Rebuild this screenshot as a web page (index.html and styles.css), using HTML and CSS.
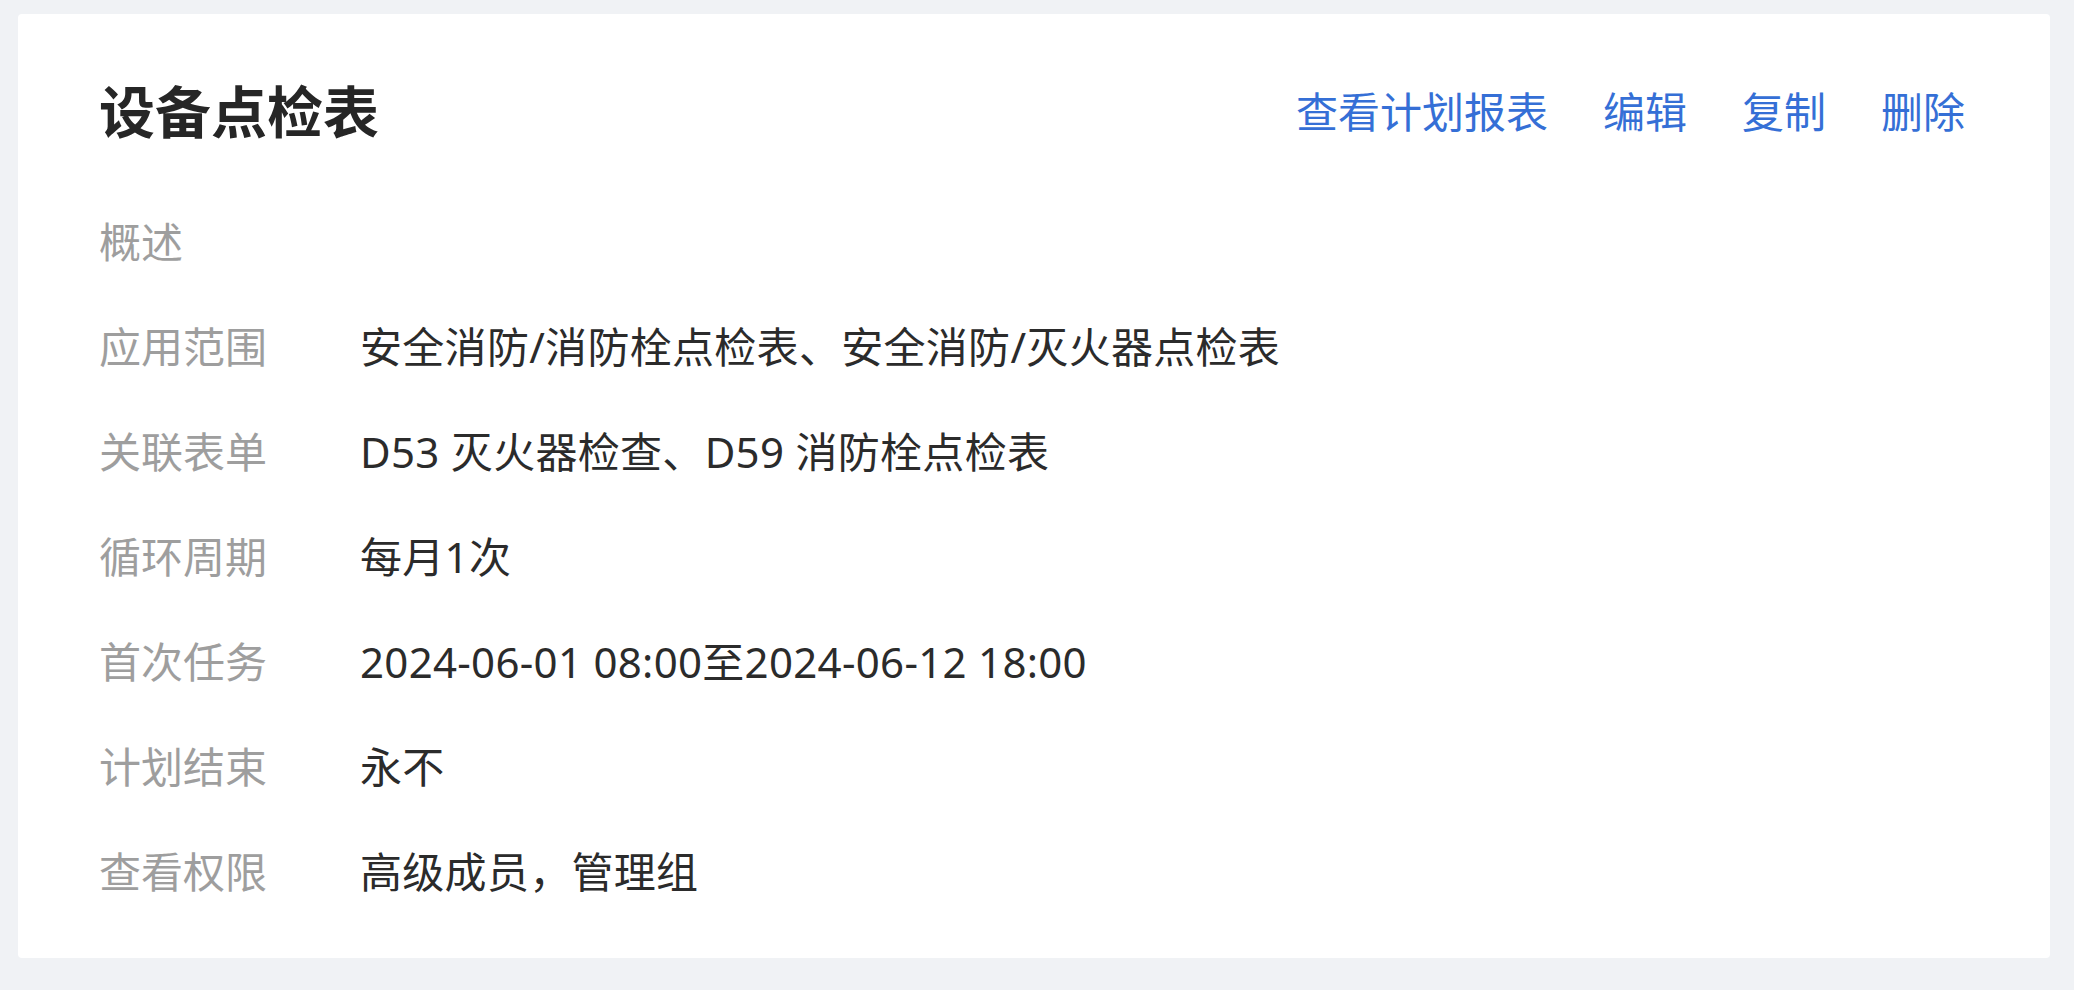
FILE: index.html
```html
<!DOCTYPE html>
<html lang="zh-CN">

<head>
    <meta charset="UTF-8">
    <meta name="viewport" content="width=device-width, initial-scale=1.0">
    <title>设备点检表 - 计划详情</title>
    <link rel="stylesheet" href="styles.css">
</head>

<body>
    <div class="plan-card">
        <div class="plan-header">
            <h1 class="plan-title">设备点检表</h1>
            <div class="plan-actions">
                <a href="#" class="action-link">查看计划报表</a>
                <a href="#" class="action-link">编辑</a>
                <a href="#" class="action-link">复制</a>
                <a href="#" class="action-link">删除</a>
            </div>
        </div>

        <dl class="plan-info">
            <dt class="info-label">概述</dt>
            <dd class="info-value"></dd>

            <dt class="info-label">应用范围</dt>
            <dd class="info-value">安全消防/消防栓点检表、安全消防/灭火器点检表</dd>

            <dt class="info-label">关联表单</dt>
            <dd class="info-value">D53 灭火器检查、D59 消防栓点检表</dd>

            <dt class="info-label">循环周期</dt>
            <dd class="info-value">每月1次</dd>

            <dt class="info-label">首次任务</dt>
            <dd class="info-value">2024-06-01 08:00至2024-06-12 18:00</dd>

            <dt class="info-label">计划结束</dt>
            <dd class="info-value">永不</dd>

            <dt class="info-label">查看权限</dt>
            <dd class="info-value">高级成员，管理组</dd>
        </dl>
    </div>
</body>

</html>
```

FILE: styles.css
```css
* {
    margin: 0;
    padding: 0;
    box-sizing: border-box;
}

body {
    font-family: 'Noto Sans', 'Noto Sans CJK SC', sans-serif;
    background: #f0f2f5;
    padding: 14px 24px 32px 18px;
}

.plan-card {
    background: #fff;
    border-radius: 4px;
    padding: 58px 85px 55px 81px;
}

.plan-header {
    display: flex;
    align-items: center;
    justify-content: space-between;
    margin-bottom: 60px;
}

.plan-title {
    font-size: 56px;
    line-height: 78px;
    font-weight: bold;
    color: #262626;
}

.plan-actions {
    display: flex;
    gap: 55px;
}

.action-link {
    font-size: 42px;
    line-height: 63px;
    color: #356fd6;
    text-decoration: none;
}

.action-link:hover {
    color: #1f57b8;
}

.plan-info {
    display: grid;
    grid-template-columns: 261px 1fr;
    row-gap: 42px;
    font-size: 42px;
    line-height: 63px;
}

.info-label {
    color: #9e9e9e;
}

.info-value {
    color: #2b2b2b;
    min-height: 63px;
    letter-spacing: 0.3px;
}
```
